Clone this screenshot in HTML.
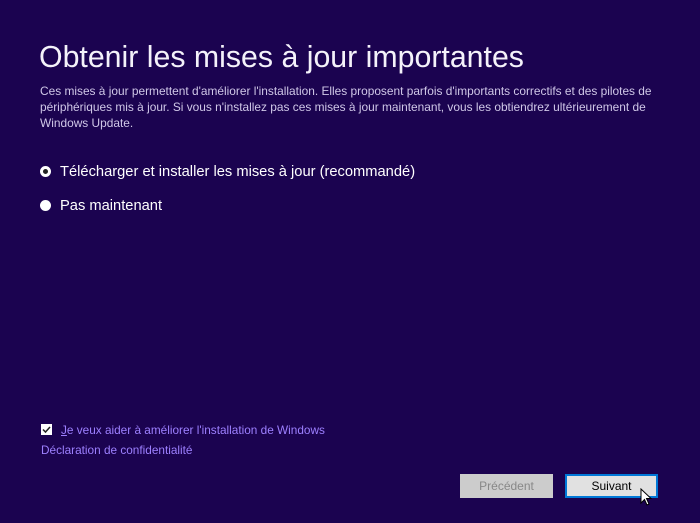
<!DOCTYPE html>
<html><head><meta charset="utf-8"><style>
html,body{margin:0;padding:0}
body{width:700px;height:523px;background:#1b0350;font-family:"Liberation Sans",sans-serif;position:relative;overflow:hidden;color:#fff}
.t{position:absolute;left:39px;top:41px;font-size:30.3px;color:#f4f2fa;white-space:nowrap;letter-spacing:0px}
.d{position:absolute;left:40px;top:83px;width:622px;font-size:11.9px;line-height:16px;color:#d0c8e8}
.r{position:absolute;left:40px;font-size:14.7px;color:#fff;white-space:nowrap}
.rad{display:inline-block;width:11px;height:11px;border-radius:50%;background:#fff;vertical-align:middle;margin-right:9px;position:relative;top:-1px;box-sizing:border-box}
.rad.on{border:3px solid #fff;background:#222}
.cb{position:absolute;left:41px;top:424px;width:11px;height:11px;background:#fff}
.l{position:absolute;font-size:11.8px;color:#9d80ff;white-space:nowrap}
.b{position:absolute;top:474px;width:93px;height:24px;box-sizing:border-box;font-size:12px;text-align:center;line-height:22px}
</style></head><body>
<div class="t">Obtenir les mises à jour importantes</div>
<div class="d">Ces mises à jour permettent d'améliorer l'installation. Elles proposent parfois d'importants correctifs et des pilotes de périphériques mis à jour. Si vous n'installez pas ces mises à jour maintenant, vous les obtiendrez ultérieurement de Windows Update.</div>
<div class="r" style="top:164px"><span class="rad on"></span>Télécharger et installer les mises à jour (recommandé)</div>
<div class="r" style="top:198px"><span class="rad"></span>Pas maintenant</div>
<div class="cb"><svg width="11" height="11" viewBox="0 0 11 11" style="position:absolute;left:0;top:0"><path d="M2 5.5L4.5 8L9 3" stroke="#222" stroke-width="1.5" fill="none"/></svg></div>
<div class="l" style="left:61px;top:423px"><u>J</u>e veux aider à améliorer l'installation de Windows</div>
<div class="l" style="left:41px;top:443px">Déclaration de confidentialité</div>
<div class="b" style="left:460px;background:#cccccc;color:#888;border:1px solid #ccc">Précédent</div>
<div class="b" style="left:565px;background:#e1e1e1;color:#000;border:2px solid #0078d7;line-height:20px">Suivant</div>
<svg width="14" height="20" viewBox="0 0 14 20" style="position:absolute;left:640px;top:488px"><path d="M1 1L1 15L4.5 11.5L7 17L9 16L6.5 10.5L11 10.5Z" fill="#fff" stroke="#000" stroke-width="1"/></svg>
</body></html>
